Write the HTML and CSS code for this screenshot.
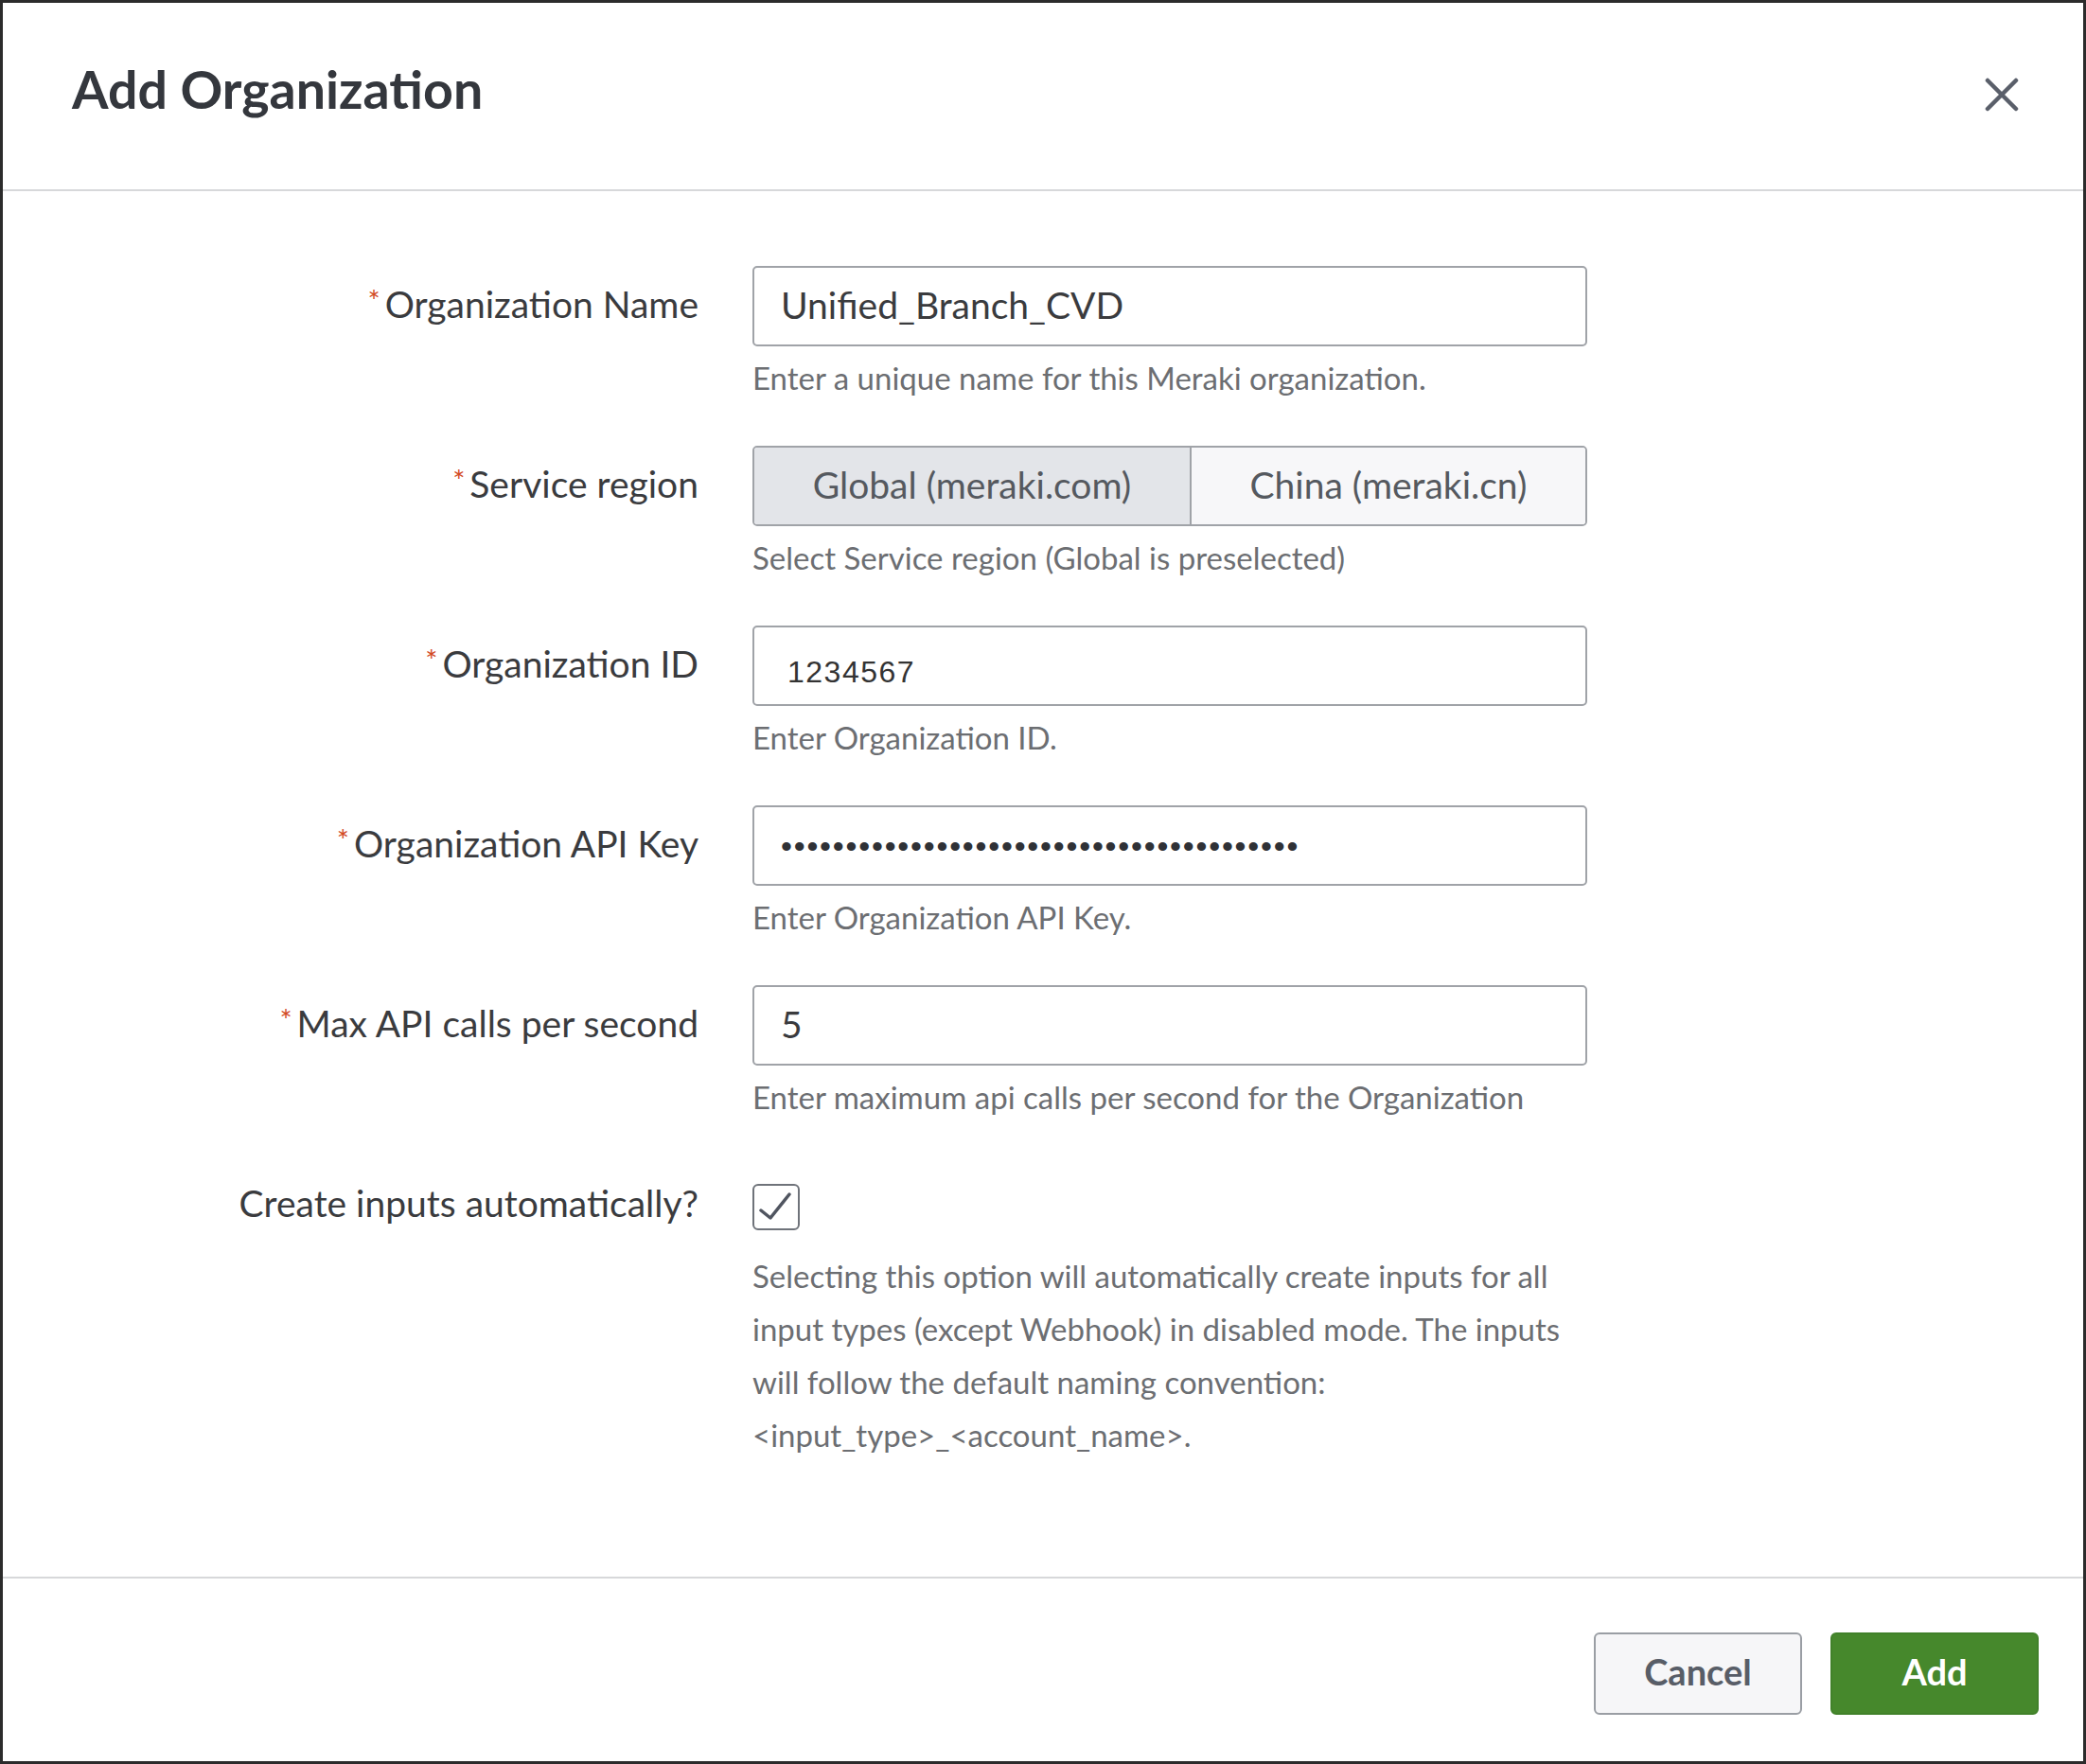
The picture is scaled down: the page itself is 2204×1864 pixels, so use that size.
FILE: index.html
```html
<!DOCTYPE html>
<html lang="en">
<head>
<meta charset="utf-8">
<title>Add Organization</title>
<link rel="stylesheet" href="styles.css">
</head>
<body>
<div class="dialog">
  <header class="dlg-head">
    <h1 class="dlg-title">Add Organization</h1>
    <button class="close" type="button" aria-label="Close">
      <svg width="36" height="36" viewBox="0 0 36 36"><path d="M3 3 L33 33 M33 3 L3 33" stroke="#5a5f6a" stroke-width="4.5" stroke-linecap="round" fill="none"/></svg>
    </button>
  </header>

  <main class="dlg-body">
    <div class="form">
      <div class="label"><span class="req">*</span>Organization Name</div>
      <div class="control">
        <div class="input">Unified_Branch_CVD</div>
        <div class="hint">Enter a unique name for this Meraki organization.</div>
      </div>

      <div class="label"><span class="req">*</span>Service region</div>
      <div class="control">
        <div class="seg">
          <div class="seg-opt active">Global (meraki.com)</div>
          <div class="seg-opt">China (meraki.cn)</div>
        </div>
        <div class="hint">Select Service region (Global is preselected)</div>
      </div>

      <div class="label"><span class="req">*</span>Organization ID</div>
      <div class="control">
        <div class="input input-id">1234567</div>
        <div class="hint">Enter Organization ID.</div>
      </div>

      <div class="label"><span class="req">*</span>Organization API Key</div>
      <div class="control">
        <div class="input input-pw"><span class="dots">••••••••••••••••••••••••••••••••••••••••</span></div>
        <div class="hint">Enter Organization API Key.</div>
      </div>

      <div class="label"><span class="req">*</span>Max API calls per second</div>
      <div class="control">
        <div class="input">5</div>
        <div class="hint">Enter maximum api calls per second for the Organization</div>
      </div>

      <div class="label">Create inputs automatically?</div>
      <div class="control">
        <div class="check-row">
          <span class="checkbox">
            <svg width="46" height="45" viewBox="0 0 46 45"><polyline points="7,26 17,34 37,9" fill="none" stroke="#505560" stroke-width="3.5" stroke-linecap="round" stroke-linejoin="round"/></svg>
          </span>
        </div>
        <div class="hint hint-long">Selecting this option will automatically create inputs for all<br>input types (except Webhook) in disabled mode. The inputs<br>will follow the default naming convention:<br>&lt;input_type&gt;_&lt;account_name&gt;.</div>
      </div>
    </div>
  </main>

  <footer class="dlg-foot">
    <button class="btn btn-cancel" type="button">Cancel</button>
    <button class="btn btn-add" type="button">Add</button>
  </footer>
</div>
</body>
</html>
```

FILE: styles.css
```css
html, body {
  margin: 0;
  padding: 0;
  background: #ffffff;
}

.dialog {
  width: 2204px;
  height: 1864px;
  box-sizing: border-box;
  border: 3px solid #2b2b2b;
  display: flex;
  flex-direction: column;
  font-family: Lato, "Noto Sans", sans-serif;
  color: #3a3b3e;
  background: #ffffff;
}

/* Header */
.dlg-head {
  flex: none;
  height: 199px;
  box-sizing: border-box;
  border-bottom: 2px solid #d7d8da;
  display: flex;
  align-items: flex-start;
  justify-content: space-between;
  padding: 59px 68px 0 73px;
}

.dlg-title {
  margin: 0;
  font-size: 55.5px;
  line-height: 64px;
  font-weight: 700;
  color: #34373d;
}

.close {
  margin-top: 20px;
  width: 36px;
  height: 36px;
  padding: 0;
  border: 0;
  background: transparent;
  display: block;
}

.close svg {
  display: block;
}

/* Body */
.dlg-body {
  flex: 1;
  padding-top: 79px;
}

.form {
  display: grid;
  grid-template-columns: 735px 882px;
  column-gap: 57px;
  row-gap: 52px;
}

.label {
  text-align: right;
  font-size: 39px;
  line-height: 80px;
  color: #3a3b3e;
  white-space: nowrap;
}

.req {
  color: #d2491f;
  font-size: 31px;
  line-height: 1;
  vertical-align: 7px;
  margin-right: 5px;
}

.control {
  display: flex;
  flex-direction: column;
}

.input {
  height: 85px;
  box-sizing: border-box;
  border: 2px solid #a0a3a8;
  border-radius: 5px;
  padding: 0 28px;
  font-size: 39px;
  line-height: 78px;
  color: #3a3b3e;
  background: #ffffff;
}

.input-id {
  font-family: "Liberation Sans", Arial, sans-serif;
  font-size: 32px;
  letter-spacing: 1.5px;
  padding-left: 35px;
  padding-top: 8px;
  color: #333333;
}

.input-pw {
  display: flex;
  align-items: center;
  padding-left: 28px;
}

.dots {
  font-family: "Liberation Sans", Arial, sans-serif;
  font-size: 34px;
  line-height: 34px;
  letter-spacing: 1.8px;
  color: #2f3136;
}

.hint {
  margin-top: 13px;
  font-size: 33px;
  line-height: 40px;
  color: #6c6e72;
  white-space: nowrap;
}

.hint-long {
  margin-top: 4px;
  line-height: 56px;
}

/* Segmented control */
.seg {
  display: flex;
  height: 85px;
  box-sizing: border-box;
  border: 2px solid #a0a3a8;
  border-radius: 5px;
  overflow: hidden;
}

.seg-opt {
  flex: 1 1 auto;
  padding: 0 60px;
  text-align: center;
  font-size: 39px;
  line-height: 78px;
  color: #55595f;
  background: #f7f7f9;
  white-space: nowrap;
}

.seg-opt.active {
  background: #e3e5e9;
  border-right: 2px solid #a0a3a8;
}

/* Checkbox */
.check-row {
  height: 85px;
  display: flex;
  align-items: center;
}

.checkbox {
  width: 50px;
  height: 49px;
  margin-top: 4px;
  box-sizing: border-box;
  border: 2.5px solid #6f737a;
  border-radius: 6px;
  display: flex;
  align-items: center;
  justify-content: center;
  background: #ffffff;
}

.checkbox svg {
  display: block;
}

/* Footer */
.dlg-foot {
  flex: none;
  border-top: 2px solid #d7d8da;
  padding: 57px 47px 49px 0;
  display: flex;
  justify-content: flex-end;
  gap: 30px;
}

.btn {
  width: 220px;
  height: 87px;
  box-sizing: border-box;
  border-radius: 6px;
  font-family: Lato, "Noto Sans", sans-serif;
  font-size: 38px;
  font-weight: 700;
  padding: 0 0 6px;
  cursor: pointer;
}

.btn-cancel {
  background: #f6f6f8;
  border: 2px solid #9a9ea4;
  color: #585d67;
}

.btn-add {
  background: #46882c;
  border: 2px solid #41812a;
  color: #ffffff;
}
```
